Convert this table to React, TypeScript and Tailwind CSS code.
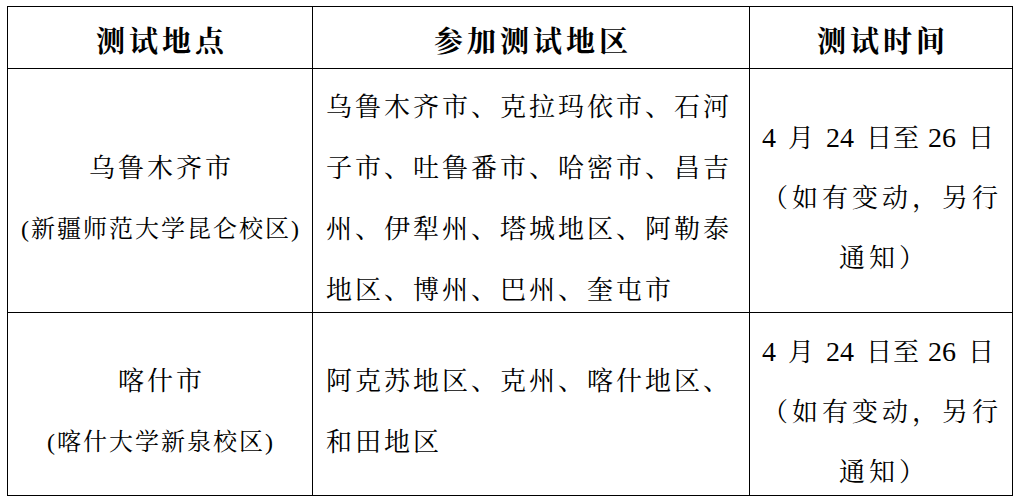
const font = "font-['Liberation_Serif','Noto_Serif_CJK_SC','Noto_Sans_CJK_SC',serif]";

const headers = ['测试地点', '参加测试地区', '测试时间'];

const rows = [
  {
    place: '乌鲁木齐市',
    campus: '(新疆师范大学昆仑校区)',
    regions: ['乌鲁木齐市、克拉玛依市、石河', '子市、吐鲁番市、哈密市、昌吉', '州、伊犁州、塔城地区、阿勒泰', '地区、博州、巴州、奎屯市'],
  },
  {
    place: '喀什市',
    campus: '(喀什大学新泉校区)',
    regions: ['阿克苏地区、克州、喀什地区、', '和田地区'],
  },
];

export default function App() {
  return (
    <div className={`w-[1016px] h-[502px] bg-white text-black ${font}`}>
      <div className="ml-[7px] mt-[6px] w-[1006px] grid grid-cols-[305px_437px_263px] grid-rows-[62px_244px_183px] border-l border-t border-black">
        {headers.map((h) => (
          <div
            key={h}
            className="flex items-center justify-center pt-[10px] pl-[4px] border-r border-b border-black text-[29px] font-bold tracking-[4px] whitespace-nowrap"
          >
            {h}
          </div>
        ))}

        {rows.map((r) => (
          <div key={r.place} className="contents">
            <div className="flex flex-col items-center justify-center pt-[16px] border-r border-b border-black leading-[61px] whitespace-nowrap">
              <div className="text-[26px] tracking-[3px] pl-[3px]">{r.place}</div>
              <div className="text-[24px] tracking-[2px] pl-[2px]">{r.campus}</div>
            </div>
            <div className="flex flex-col justify-center pt-[16px] pl-[13px] border-r border-b border-black text-[26px] leading-[61px] tracking-[3px] whitespace-nowrap">
              {r.regions.map((line) => (
                <div key={line}>{line}</div>
              ))}
            </div>
            <div className="flex flex-col items-center justify-center pt-[16px] border-r border-b border-black text-[26px] leading-[60px] whitespace-nowrap">
              <div className="pr-[6px]">
                <span className="text-[28px]">4</span>
                <span className="ml-[12px] mr-[12px]">月</span>
                <span className="text-[28px]">24</span>
                <span className="ml-[12px] tracking-[1px]">日至</span>
                <span className="ml-[8px] text-[28px]">26</span>
                <span className="ml-[12px]">日</span>
              </div>
              <div className="tracking-[4px] pl-[2px]">（如有变动，另行</div>
              <div className="tracking-[4px] pl-[6px]">通知）</div>
            </div>
          </div>
        ))}
      </div>
    </div>
  );
}
